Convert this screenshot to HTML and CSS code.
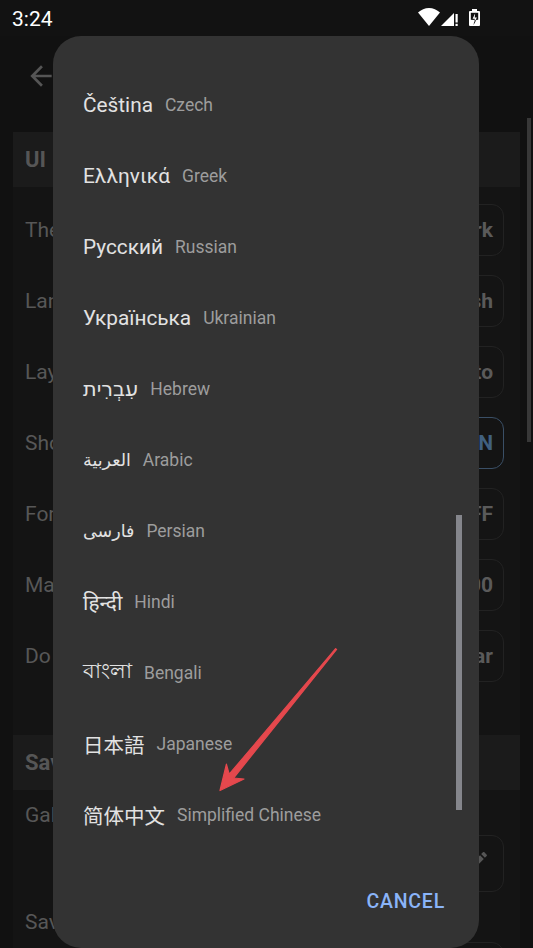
FILE: index.html
```html
<!DOCTYPE html>
<html lang="en">
<head>
<meta charset="utf-8">
<title>Settings</title>
<link rel="stylesheet" href="styles.css">
</head>
<body>
<div class="screen">
  <header class="status">
    <span class="clock">3:24</span>
    <svg class="status-icons" width="80" height="36" viewBox="0 0 80 36">
      <!-- wifi -->
      <path d="M13 26 L2 12.5 C5 9.8 9 8 13 8 S21 9.8 24 12.5 Z" fill="#fff"/>
      <!-- cellular, no data -->
      <polygon points="25,26 38,13 38,26" fill="#fff"/>
      <rect x="39.5" y="14" width="2.2" height="8.5" fill="#fff"/>
      <rect x="39.5" y="23.8" width="2.2" height="2.2" fill="#fff"/>
      <!-- battery charging -->
      <rect x="56" y="9" width="5" height="2.5" fill="#fff"/>
      <rect x="53" y="11" width="11" height="15" rx="1" fill="#fff"/>
      <rect x="54.8" y="12.8" width="7.4" height="7" fill="#121212"/>
      <path d="M59.6 12.6 L55.8 19.6 H58.4 L57.6 25 L61.6 17.4 H59 Z" fill="#121212"/>
      <path d="M59.2 13.2 L56.6 18.8 H58.8 L58.2 22.4 L60.9 17.6 H58.7 Z" fill="#fff"/>
    </svg>
  </header>

  <div class="appbar">
    <svg class="back" width="32" height="32" viewBox="0 0 24 24">
      <path d="M20 11H7.83l5.59-5.59L12 4l-8 8 8 8 1.41-1.41L7.83 13H20v-2z" fill="currentColor"/>
    </svg>
  </div>

  <main class="settings">
    <section class="group">
      <h2 class="group-title">UI</h2>
      <div class="row"><span class="label">Theme</span><span class="chip">Dark</span></div>
      <div class="row"><span class="label">Language</span><span class="chip">English</span></div>
      <div class="row"><span class="label">Layout</span><span class="chip">Auto</span></div>
      <div class="row"><span class="label">Show hidden files</span><span class="chip chip-on">ON</span></div>
      <div class="row"><span class="label">Format</span><span class="chip">OFF</span></div>
      <div class="row"><span class="label">Max threads</span><span class="chip">100</span></div>
      <div class="row"><span class="label">Do not disturb</span><span class="chip">Clear</span></div>
    </section>

    <section class="group">
      <h2 class="group-title">Saving</h2>
      <div class="row row-tall">
        <span class="label">Gallery folder</span>
        <span class="chip chip-icon">
          <svg width="24" height="24" viewBox="0 0 24 24"><path d="M3 17.25V21h3.75L17.81 9.94l-3.75-3.75L3 17.25zM20.71 7.04c.39-.39.39-1.02 0-1.41l-2.34-2.34c-.39-.39-1.02-.39-1.41 0l-1.83 1.83 3.75 3.75 1.83-1.83z" fill="currentColor"/></svg>
        </span>
      </div>
      <div class="row row-tall">
        <span class="label">Save as</span>
        <span class="chip chip-icon"></span>
      </div>
    </section>
  </main>

  <div class="page-thumb"></div>
</div>

<div class="dialog" role="dialog">
  <ul class="lang-list">
    <li class="lang"><bdi class="native">Čeština</bdi><span class="english">Czech</span></li>
    <li class="lang"><bdi class="native">Ελληνικά</bdi><span class="english">Greek</span></li>
    <li class="lang"><bdi class="native">Русский</bdi><span class="english">Russian</span></li>
    <li class="lang"><bdi class="native">Українська</bdi><span class="english">Ukrainian</span></li>
    <li class="lang"><bdi class="native">עִבְרִית</bdi><span class="english">Hebrew</span></li>
    <li class="lang"><bdi class="native arabic">العربية</bdi><span class="english">Arabic</span></li>
    <li class="lang"><bdi class="native arabic">فارسی</bdi><span class="english">Persian</span></li>
    <li class="lang"><bdi class="native">हिन्दी</bdi><span class="english">Hindi</span></li>
    <li class="lang"><bdi class="native">বাংলা</bdi><span class="english">Bengali</span></li>
    <li class="lang"><bdi class="native cjk">日本語</bdi><span class="english">Japanese</span></li>
    <li class="lang"><bdi class="native cjk">简体中文</bdi><span class="english">Simplified Chinese</span></li>
  </ul>
  <div class="list-thumb"></div>
  <div class="actions"><button class="text-btn" type="button">CANCEL</button></div>
</div>

<svg class="pointer" width="533" height="948" viewBox="0 0 533 948">
  <polygon points="336.6,649.4 233.6,778 244,779 220,790.5 226.4,764.2 229.2,774.2 335.6,648.6"
           fill="#e5484d" stroke="#e5484d" stroke-width="1.2" stroke-linejoin="round"/>
</svg>
</body>
</html>
```

FILE: styles.css
```css
* { box-sizing: border-box; }

html, body {
  margin: 0;
  padding: 0;
  background: #111111;
  font-family: Roboto, "Noto Sans", "DejaVu Sans", sans-serif;
}

body {
  width: 533px;
  height: 948px;
  overflow: hidden;
  position: relative;
}

/* ---------- dimmed settings page ---------- */
.screen {
  height: 948px;
  overflow: hidden;
  background: #111111;
}

.status {
  height: 36px;
  background: #121212;
  display: flex;
  align-items: center;
  justify-content: space-between;
  padding: 0 0 0 12px;
}

.clock {
  color: #ffffff;
  font-size: 21px;
  line-height: 36px;
  padding-top: 1px;
}

.status-icons {
  display: block;
  margin-right: 37px;
}

.appbar {
  height: 82px;
  display: flex;
  align-items: center;
  padding-left: 25px;
}

.back {
  display: block;
  color: #555555;
  margin-top: -2px;
}

.settings {
  margin: 14px 13px 0 13px;
  background: #141414;
  width: 507px;
  height: 820px;
}

.group {
  display: flex;
  flex-direction: column;
}

.group + .group {
  margin-top: 44px;
}

.group-title {
  margin: 0;
  height: 55px;
  display: flex;
  align-items: center;
  padding-left: 12px;
  background: #1b1b1b;
  color: #565656;
  font-size: 22px;
  font-weight: 700;
}

.group-title + .row {
  margin-top: 7px;
}

.row {
  height: 71px;
  display: flex;
  align-items: center;
  justify-content: space-between;
  padding: 0 16px 0 12px;
}

.label {
  color: #575757;
  font-size: 21px;
}

.chip {
  height: 52px;
  display: flex;
  align-items: center;
  padding: 0 10px 0 14px;
  border: 1.5px solid #222222;
  border-radius: 12px;
  color: #5a5a5a;
  font-size: 21px;
  font-weight: 700;
}

.chip-on {
  border-color: #3a4f66;
  color: #40607f;
}

.row-tall {
  height: 107px;
  flex-direction: column;
  align-items: stretch;
  justify-content: flex-start;
}

.group-title + .row-tall {
  margin-top: 0;
}

.row-tall .label {
  line-height: 36px;
  margin-top: 7px;
}

.chip-icon {
  align-self: flex-end;
  height: 57px;
  width: 110px;
  margin-top: 2px;
  justify-content: flex-end;
  padding-right: 13px;
  padding-bottom: 6px;
  color: #565656;
}

.chip-icon svg { display: block; }

.page-thumb {
  position: absolute;
  left: 527px;
  top: 118px;
  width: 4px;
  height: 324px;
  background: #383838;
}

/* ---------- language picker dialog ---------- */
.dialog {
  position: absolute;
  left: 53px;
  top: 36px;
  width: 426px;
  height: 912px;
  background: #333333;
  border-radius: 28px;
  display: flex;
  flex-direction: column;
}

.lang-list {
  list-style: none;
  margin: 0;
  padding: 33px 0 0 30px;
}

.lang {
  height: 71px;
  display: flex;
  align-items: center;
  gap: 12px;
}

.native {
  color: #e2e2e2;
  font-size: 20.8px;
  unicode-bidi: isolate;
}

.native.arabic {
  font-size: 17.5px;
}

.native.cjk {
  font-family: "Noto Sans CJK SC", "Noto Sans CJK JP", sans-serif;
  font-size: 20.5px;
}

.english {
  color: #9d9d9d;
  font-size: 17.5px;
}

.list-thumb {
  position: absolute;
  left: 403px;
  top: 479px;
  width: 6px;
  height: 295px;
  background: #85868c;
}

.actions {
  display: flex;
  justify-content: flex-end;
  padding: 33px 26px 0 0;
}

.text-btn {
  height: 36px;
  border: 0;
  background: transparent;
  padding: 0 8px;
  color: #8ab4f8;
  font-family: Roboto, sans-serif;
  font-size: 19.5px;
  font-weight: 500;
  letter-spacing: 0.8px;
  cursor: pointer;
}

/* ---------- callout arrow ---------- */
.pointer {
  position: absolute;
  left: 0;
  top: 0;
  pointer-events: none;
}
```
